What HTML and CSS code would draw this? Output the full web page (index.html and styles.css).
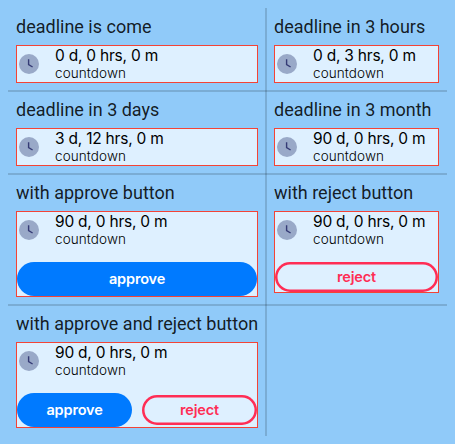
FILE: index.html
```
<!DOCTYPE html>
<html lang="en">
<head>
<meta charset="utf-8">
<title>Countdown</title>
<link rel="stylesheet" href="styles.css">
</head>
<body>
<svg width="0" height="0" class="defs"><symbol id="clock" viewBox="0 0 20 20"><circle cx="10" cy="10" r="10" fill="#99a9c8"/><path d="M9.6 5.3V10.5L13.6 13" fill="none" stroke="#353b75" stroke-width="1.4"/></symbol></svg>
<main class="board">
<div class="row">
<section class="cell"><h2>deadline is come</h2><div class="card"><div class="info"><svg class="icon"><use href="#clock"/></svg><div><p class="time">0 d, 0 hrs, 0 m</p><p class="caption">countdown</p></div></div></div></section>
<section class="cell"><h2>deadline in 3 hours</h2><div class="card"><div class="info"><svg class="icon"><use href="#clock"/></svg><div><p class="time">0 d, 3 hrs, 0 m</p><p class="caption">countdown</p></div></div></div></section>
</div>
<div class="row">
<section class="cell"><h2>deadline in 3 days</h2><div class="card"><div class="info"><svg class="icon"><use href="#clock"/></svg><div><p class="time">3 d, 12 hrs, 0 m</p><p class="caption">countdown</p></div></div></div></section>
<section class="cell"><h2>deadline in 3 month</h2><div class="card"><div class="info"><svg class="icon"><use href="#clock"/></svg><div><p class="time">90 d, 0 hrs, 0 m</p><p class="caption">countdown</p></div></div></div></section>
</div>
<div class="row">
<section class="cell"><h2>with approve button</h2><div class="card"><div class="info"><svg class="icon"><use href="#clock"/></svg><div><p class="time">90 d, 0 hrs, 0 m</p><p class="caption">countdown</p></div></div><div class="actions"><button class="approve">approve</button></div></div></section>
<section class="cell"><h2>with reject button</h2><div class="card"><div class="info"><svg class="icon"><use href="#clock"/></svg><div><p class="time">90 d, 0 hrs, 0 m</p><p class="caption">countdown</p></div></div><div class="actions"><button class="reject">reject</button></div></div></section>
</div>
<div class="row">
<section class="cell"><h2>with approve and reject button</h2><div class="card"><div class="info"><svg class="icon"><use href="#clock"/></svg><div><p class="time">90 d, 0 hrs, 0 m</p><p class="caption">countdown</p></div></div><div class="actions"><button class="approve">approve</button><button class="reject">reject</button></div></div></section>
</div>
</main>
</body>
</html>
```
FILE: styles.css
```
* { box-sizing: border-box; }
body { margin: 0; padding: 8px; background: #90caf9; font-family: Inter, sans-serif; }
.defs { position: absolute; }
.board { position: relative; width: 439px; }
.board::before { content: ""; position: absolute; left: 257px; top: 0; width: 2px; height: 100%; background: rgba(0, 0, 0, .15); }
.row { position: relative; display: grid; grid-template-columns: 258px 181px; align-items: start; }
.row:not(:last-child)::after { content: ""; position: absolute; left: 0; bottom: -1px; width: 100%; height: 2px; background: rgba(0, 0, 0, .15); }
.cell { padding: 8px; }
h2 { margin: 0 0 8px; font: 400 18px/21px Roboto, sans-serif; color: rgba(0, 0, 0, .87); white-space: nowrap; }
.card { border: 1px solid #f44336; background: #def0ff; }
.info { display: flex; align-items: flex-start; gap: 16px; height: 36px; padding-left: 2px; }
.icon { width: 20px; height: 20px; margin-top: 8px; }
p { margin: 0; white-space: nowrap; color: #000; }
.time { font: 400 15.5px/20px Inter, sans-serif; letter-spacing: -.22px; }
.caption { margin-top: -1px; font: 300 13.5px/16px Inter, sans-serif; letter-spacing: .1px; }
.actions { display: flex; align-items: center; gap: 10px; margin-top: 14px; }
button { flex: 1 1 100%; min-width: 0; padding: 0; border: 0; border-radius: 17px; font: 600 14.5px/20px Inter, sans-serif; letter-spacing: -.15px; }
.approve { height: 34px; background: #007aff; color: #fff; }
.reject { height: 30px; background: transparent; box-shadow: inset 0 0 0 2.5px #ff2d55; color: #ff2d55; }
```
